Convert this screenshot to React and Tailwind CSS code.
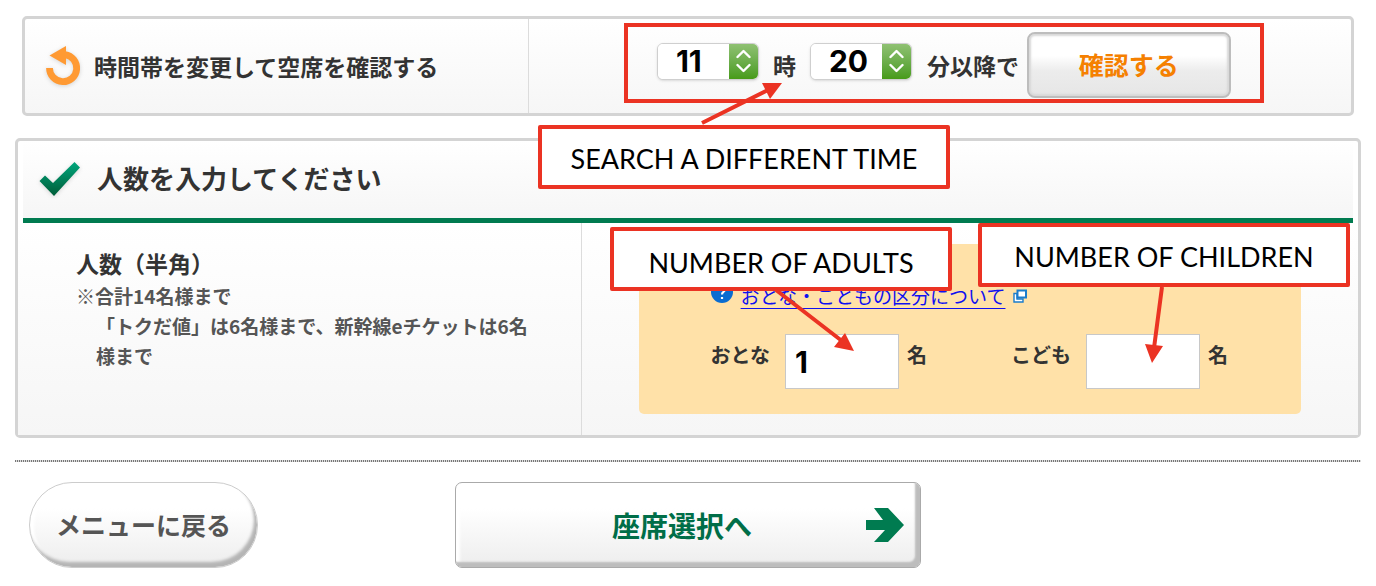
import { useState } from "react";

const HOURS = ["06", "07", "08", "09", "10", "11", "12", "13", "14", "15", "16", "17", "18", "19", "20"];
const MINUTES = ["00", "10", "20", "30", "40", "50"];

const RetryIcon = () => (
  <svg width="36" height="42" viewBox="0 0 36 42" className="shrink-0 drop-shadow-sm" aria-hidden="true">
    <path d="M4.5 23A13.6 13.6 0 1 0 20 9.6" fill="none" stroke="#ff9a33" strokeWidth="6.8" />
    <path d="M4.5 10.500L21 1V20Z" fill="#ff9a33" />
  </svg>
)

const CheckIcon = () => (
  <svg width="42" height="36" viewBox="0 0 42 36" className="shrink-0 drop-shadow-sm" aria-hidden="true">
    <defs>
      <linearGradient id="check" x1="0" y1="0" x2="0" y2="1">
        <stop offset="0" stopColor="#00a67c" />
        <stop offset="1" stopColor="#005c38" />
      </linearGradient>
    </defs>
    <path d="M.5 19L6 13.500L14 21L35.500 0L41 5.500L15 34Z" fill="url(#check)" />
  </svg>
)

const TimeSelect = ({ label, value, options, onChange }) => (
  <div className="relative mb-1 flex w-[102px] overflow-hidden rounded-[6px] border border-[#cfcfcf] bg-white shadow-sm">
    <select
      aria-label={label}
      value={value}
      onChange={(e) => onChange(e.target.value)}
      className="h-[35px] w-full appearance-none bg-white pl-[18px] font-['Inter',sans-serif] text-[30px] leading-[35px] font-bold text-black"
    >
      {options.map((o) => <option key={o}>{o}</option>)}
    </select>
    <span className="pointer-events-none absolute inset-y-0 right-0 flex w-[29px] items-center justify-center bg-linear-to-b from-[#8fc172] to-[#479b16]">
      <svg width="15" height="24" viewBox="0 0 15 24" fill="none" stroke="#fff" strokeWidth="2.400" strokeLinecap="round" strokeLinejoin="round" aria-hidden="true">
        <path d="M1.500 8L7.500 2L13.500 8M1.500 16L7.500 22L13.500 16" />
      </svg>
    </span>
  </div>
)

const PeopleField = ({ id, label, value, onChange }) => (
  <div className="flex items-start text-[20px] leading-[42px] font-bold text-[#333]">
    <label htmlFor={id}>{label}</label>
    <input
      id={id}
      type="text"
      value={value}
      onChange={(e) => onChange(e.target.value)}
      className="mr-2 ml-[15px] h-[55px] w-[114px] border border-[#c8c8c8] bg-white px-[9px] font-['Inter',sans-serif] text-[30px] font-bold text-black"
    />
    <span>名</span>
  </div>
)

const Callout = ({ className, children }) => (
  <div className={`absolute flex h-16 items-center justify-center rounded-[2px] border-4 border-[#eb3323] bg-white font-['Lato',sans-serif] text-[27px] whitespace-nowrap text-black ${className}`}>
    {children}
  </div>
)

export default function App() {
  const [hour, setHour] = useState("11");
  const [minute, setMinute] = useState("20");
  const [adults, setAdults] = useState("1");
  const [children, setChildren] = useState("");

  return (
    <main className="relative bg-white px-[15px] pt-4 pb-[18px] font-['Noto_Sans_CJK_JP',sans-serif] text-[#333]">
      <section className="mx-[7px] flex h-[100px] rounded-[5px] border-3 border-[#d4d4d4] bg-linear-to-b from-white to-[#f6f6f6]">
        <div className="flex w-[38%] items-center border-r border-[#dcdcdc] pl-5">
          <RetryIcon />
          <h2 className="ml-[13px] text-[23px] font-bold">時間帯を変更して空席を確認する</h2>
        </div>
        <div className="flex-1 pt-1 pl-[95px]">
          <div className="flex h-20 w-[640px] items-center border-4 border-[#eb3323] pl-[29px] text-[23px] font-bold">
            <TimeSelect label="時" value={hour} options={HOURS} onChange={setHour} />
            <span className="mx-[14px] pt-1">時</span>
            <TimeSelect label="分" value={minute} options={MINUTES} onChange={setMinute} />
            <span className="mr-2 ml-[15px] pt-1">分以降で</span>
            <button type="button" className="mt-1 h-[66px] w-[204px] rounded-[8px] border-2 border-[#bdbdbd] bg-linear-to-b from-white from-35% via-[#ececec] via-60% to-[#e6e6e6] text-[25px] text-[#f58000] shadow-[inset_0_0_2px_2px_#d8d8d8]">
              確認する
            </button>
          </div>
        </div>
      </section>

      <section className="mt-[22px] rounded-[5px] border-3 border-[#d4d4d4] bg-white">
        <div className="mx-[5px] flex h-[82px] items-center border-b-5 border-[#007b50] bg-linear-to-b from-white to-[#f6f6f6] pl-4">
          <CheckIcon />
          <h2 className="ml-[16px] pb-1 text-[26px] font-bold">人数を入力してください</h2>
        </div>
        <div className="flex h-[212px] bg-linear-to-b from-white to-[#f6f6f6] px-[5px]">
          <div className="w-[42%] border-r border-[#dcdcdc] pt-[22px] pr-10 pl-[53px]">
            <h3 className="text-[23px] leading-[36px] font-bold">人数（半角）</h3>
            <p className="text-[19px] leading-[30px] font-bold text-[#555]">※合計14名様まで</p>
            <p className="pl-5 text-[19px] leading-[30px] font-bold text-[#555]">「トクだ値」は6名様まで、新幹線eチケットは6名様まで</p>
          </div>
          <div className="flex-1 pt-[21px] pr-[52px] pl-[57px]">
            <div className="h-[170px] rounded-[5px] bg-[#ffe1a8] pt-[38px] pl-[72px]">
              <div className="flex h-7 items-center">
                <svg width="22" height="22" viewBox="0 0 22 22" className="mb-2" aria-hidden="true">
                  <circle cx="11" cy="11" r="11" fill="#0a6cd0" />
                  <path d="M8 8.200a3 3 0 1 1 4.500 2.600q-1.500 1-1.500 2.600M11 16v2" fill="none" stroke="#fff" strokeWidth="2.200" />
                </svg>
                <a href="#category" className="ml-2 text-[19px] text-[#1010f0] underline underline-offset-4">おとな・こともの区分について</a>
                <svg width="14" height="14" viewBox="0 0 14 14" className="ml-2" fill="none" stroke="#1a7ccc" aria-hidden="true">
                  <path d="M1 4.500V13H10V10H4V4.500Z" strokeWidth="1.400" fill="#fff" />
                  <path d="M4.500 1.500H13V8.500H4.500Z" strokeWidth="2" fill="#fff" />
                </svg>
              </div>
              <div className="mt-6 flex gap-[84px]">
                <PeopleField id="adults" label="おとな" value={adults} onChange={setAdults} />
                <PeopleField id="children" label="こども" value={children} onChange={setChildren} />
              </div>
            </div>
          </div>
        </div>
      </section>

      <div className="mt-[22px] h-[2px] bg-[repeating-linear-gradient(90deg,#777_0_1px,#ddd_1px_2px)]" />

      <div className="mt-5 flex pl-[14px]">
        <button type="button" className="h-[86px] w-[229px] rounded-full border border-[#ccc] bg-linear-to-b from-white from-30% to-[#ededed] text-[25px] font-bold text-[#555] shadow-[inset_-3px_-5px_3px_#b5b5b5,inset_4px_2px_3px_#fff]">
          メニューに戻る
        </button>
        <button type="button" className="relative ml-[197px] h-[86px] w-[466px] rounded-[7px] border border-[#aaa] bg-linear-to-b from-white from-30% to-[#ededed] pr-3 text-[28px] font-bold text-[#006e48] shadow-[inset_-5px_-5px_2px_#bdbdbd,inset_4px_2px_3px_#fff]">
          座席選択へ
          <svg width="38" height="34" viewBox="0 0 38 34" className="absolute top-[25px] right-4" aria-hidden="true">
            <path d="M0 12H17L8 0H22L38 17L22 34H8L19 22H0Z" fill="#007b50" />
          </svg>
        </button>
      </div>

      {/* notes over the form */}
      <Callout className="top-[125px] left-[538px] w-[412px] pt-1">SEARCH A DIFFERENT TIME</Callout>
      <Callout className="top-[227px] left-[610px] w-[342px] pt-2">NUMBER OF ADULTS</Callout>
      <Callout className="top-[223px] left-[978px] w-[372px] pt-1">NUMBER OF CHILDREN</Callout>
      <svg width="1376" height="400" viewBox="0 0 1376 400" className="pointer-events-none absolute top-0 left-0" fill="#eb3323" stroke="#eb3323" aria-hidden="true">
        <path d="M702 123L768 90M776 290L842 341M1162 287L1154 348" strokeWidth="4" />
        <path d="M782 83L762 83L770 99ZM854 351L845 333L834 347ZM1152 363L1145 344L1163 346Z" stroke="none" />
      </svg>
    </main>
  )
}
